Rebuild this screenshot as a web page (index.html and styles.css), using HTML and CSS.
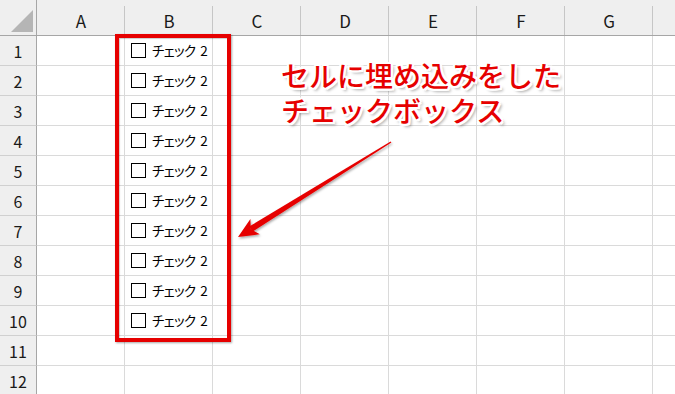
FILE: index.html
```html
<!DOCTYPE html>
<html lang="ja">
<head>
<meta charset="utf-8">
<link rel="stylesheet" href="styles.css">
</head>
<body>
<div class="sheet">
  <div class="corner"><span class="tri"></span></div>
  <div class="colhead">A</div>
  <div class="colhead">B</div>
  <div class="colhead">C</div>
  <div class="colhead">D</div>
  <div class="colhead">E</div>
  <div class="colhead">F</div>
  <div class="colhead">G</div>
  <div class="colhead last"></div>

  <div class="rowhead">1</div><div class="cell"></div><div class="cell chk"><span class="box"></span><span class="lbl">チェック<span class="num">2</span></span></div><div class="cell"></div><div class="cell"></div><div class="cell"></div><div class="cell"></div><div class="cell"></div><div class="cell last"></div>
  <div class="rowhead">2</div><div class="cell"></div><div class="cell chk"><span class="box"></span><span class="lbl">チェック<span class="num">2</span></span></div><div class="cell"></div><div class="cell"></div><div class="cell"></div><div class="cell"></div><div class="cell"></div><div class="cell last"></div>
  <div class="rowhead">3</div><div class="cell"></div><div class="cell chk"><span class="box"></span><span class="lbl">チェック<span class="num">2</span></span></div><div class="cell"></div><div class="cell"></div><div class="cell"></div><div class="cell"></div><div class="cell"></div><div class="cell last"></div>
  <div class="rowhead">4</div><div class="cell"></div><div class="cell chk"><span class="box"></span><span class="lbl">チェック<span class="num">2</span></span></div><div class="cell"></div><div class="cell"></div><div class="cell"></div><div class="cell"></div><div class="cell"></div><div class="cell last"></div>
  <div class="rowhead">5</div><div class="cell"></div><div class="cell chk"><span class="box"></span><span class="lbl">チェック<span class="num">2</span></span></div><div class="cell"></div><div class="cell"></div><div class="cell"></div><div class="cell"></div><div class="cell"></div><div class="cell last"></div>
  <div class="rowhead">6</div><div class="cell"></div><div class="cell chk"><span class="box"></span><span class="lbl">チェック<span class="num">2</span></span></div><div class="cell"></div><div class="cell"></div><div class="cell"></div><div class="cell"></div><div class="cell"></div><div class="cell last"></div>
  <div class="rowhead">7</div><div class="cell"></div><div class="cell chk"><span class="box"></span><span class="lbl">チェック<span class="num">2</span></span></div><div class="cell"></div><div class="cell"></div><div class="cell"></div><div class="cell"></div><div class="cell"></div><div class="cell last"></div>
  <div class="rowhead">8</div><div class="cell"></div><div class="cell chk"><span class="box"></span><span class="lbl">チェック<span class="num">2</span></span></div><div class="cell"></div><div class="cell"></div><div class="cell"></div><div class="cell"></div><div class="cell"></div><div class="cell last"></div>
  <div class="rowhead">9</div><div class="cell"></div><div class="cell chk"><span class="box"></span><span class="lbl">チェック<span class="num">2</span></span></div><div class="cell"></div><div class="cell"></div><div class="cell"></div><div class="cell"></div><div class="cell"></div><div class="cell last"></div>
  <div class="rowhead">10</div><div class="cell"></div><div class="cell chk"><span class="box"></span><span class="lbl">チェック<span class="num">2</span></span></div><div class="cell"></div><div class="cell"></div><div class="cell"></div><div class="cell"></div><div class="cell"></div><div class="cell last"></div>
  <div class="rowhead">11</div><div class="cell"></div><div class="cell"></div><div class="cell"></div><div class="cell"></div><div class="cell"></div><div class="cell"></div><div class="cell"></div><div class="cell last"></div>
  <div class="rowhead">12</div><div class="cell"></div><div class="cell"></div><div class="cell"></div><div class="cell"></div><div class="cell"></div><div class="cell"></div><div class="cell"></div><div class="cell last"></div>

  <div class="frame"></div>
  <div class="note"><div class="line">セルに埋め込みをした</div><div class="line">チェックボックス</div></div>
  <svg class="arrow" width="675" height="394" viewBox="0 0 675 394" xmlns="http://www.w3.org/2000/svg">
    <defs>
      <filter id="sh" x="-10%" y="-10%" width="130%" height="130%">
        <feDropShadow dx="1" dy="1.5" stdDeviation="1" flood-color="#000" flood-opacity="0.35"/>
      </filter>
    </defs>
    <g fill="#e60000" filter="url(#sh)">
      <polygon points="391.4,142.6 390.6,141.4 249.2,226.6 252.4,231.8"/>
      <polygon points="238,237 250.4,218.9 250.8,229.2 259.8,234.3"/>
    </g>
  </svg>
</div>
</body>
</html>
```
FILE: styles.css
```css
* { box-sizing: border-box; }
html, body { margin: 0; padding: 0; background: #fff; }
body {
  font-family: "Noto Sans CJK JP", "Noto Sans", sans-serif;
  overflow: hidden;
  width: 675px;
  height: 394px;
}
.sheet {
  position: relative;
  display: grid;
  grid-template-columns: 37px repeat(7, 88px) 1fr;
  grid-template-rows: 36px repeat(12, 30px);
  width: 675px;
  height: 394px;
  overflow: hidden;
}
.corner {
  background: #efefef;
  border-right: 1px solid #a6a6a6;
  border-bottom: 1px solid #a6a6a6;
  position: relative;
}
.tri {
  position: absolute;
  left: 11px;
  top: 10px;
  width: 0;
  height: 0;
  border-left: 22px solid transparent;
  border-bottom: 22px solid #b5b5b5;
}
.colhead {
  background: linear-gradient(#c6c6c6, #c6c6c6) right bottom / 1px 29px no-repeat, #efefef;
  border-bottom: 1px solid #a6a6a6;
  display: flex;
  align-items: center;
  justify-content: center;
  padding-top: 6px;
  font-family: "Noto Sans CJK JP", sans-serif;
  font-size: 17px;
  color: #1a1a1a;
}
.colhead.last { background: #efefef; }
.rowhead {
  background: #efefef;
  border-right: 1px solid #a6a6a6;
  border-bottom: 1px solid #d0d0d0;
  display: flex;
  align-items: center;
  justify-content: center;
  font-size: 16px;
  color: #1a1a1a;
}
.cell {
  border-right: 1px solid #dadada;
  border-bottom: 1px solid #dadada;
}
.cell.last { border-right: none; }
.chk {
  display: flex;
  align-items: center;
  padding-left: 6px;
  gap: 6px;
}
.box {
  width: 15px;
  height: 15px;
  border: 1px solid #000;
  background: #fff;
  flex: none;
}
.lbl {
  font-size: 13.5px;
  color: #000;
  font-feature-settings: "palt";
  letter-spacing: -0.7px;
  line-height: 1;
  white-space: nowrap;
}
.num {
  margin-left: 5px;
  letter-spacing: 0;
}
.frame {
  position: absolute;
  left: 115px;
  top: 34px;
  width: 116px;
  height: 308px;
  border: 4px solid #e60000;
  box-shadow: 1px 1px 2px rgba(0,0,0,0.35), inset 1px 1px 1px rgba(0,0,0,0.2);
}
.note {
  position: absolute;
  left: 281px;
  top: 58px;
  font-size: 28px;
  font-weight: 500;
  color: #e60000;
  white-space: nowrap;
  display: flex;
  flex-direction: column;
  gap: 1px;
  text-shadow:
    -2px 0 0 #fff, 2px 0 0 #fff, 0 -2px 0 #fff, 0 2px 0 #fff,
    -2px -2px 0 #fff, 2px -2px 0 #fff, -2px 2px 0 #fff, 2px 2px 0 #fff,
    3px 3px 3px rgba(0,0,0,0.35);
}
.line { line-height: 34px; }
.arrow {
  position: absolute;
  left: 0;
  top: 0;
  pointer-events: none;
}
```
